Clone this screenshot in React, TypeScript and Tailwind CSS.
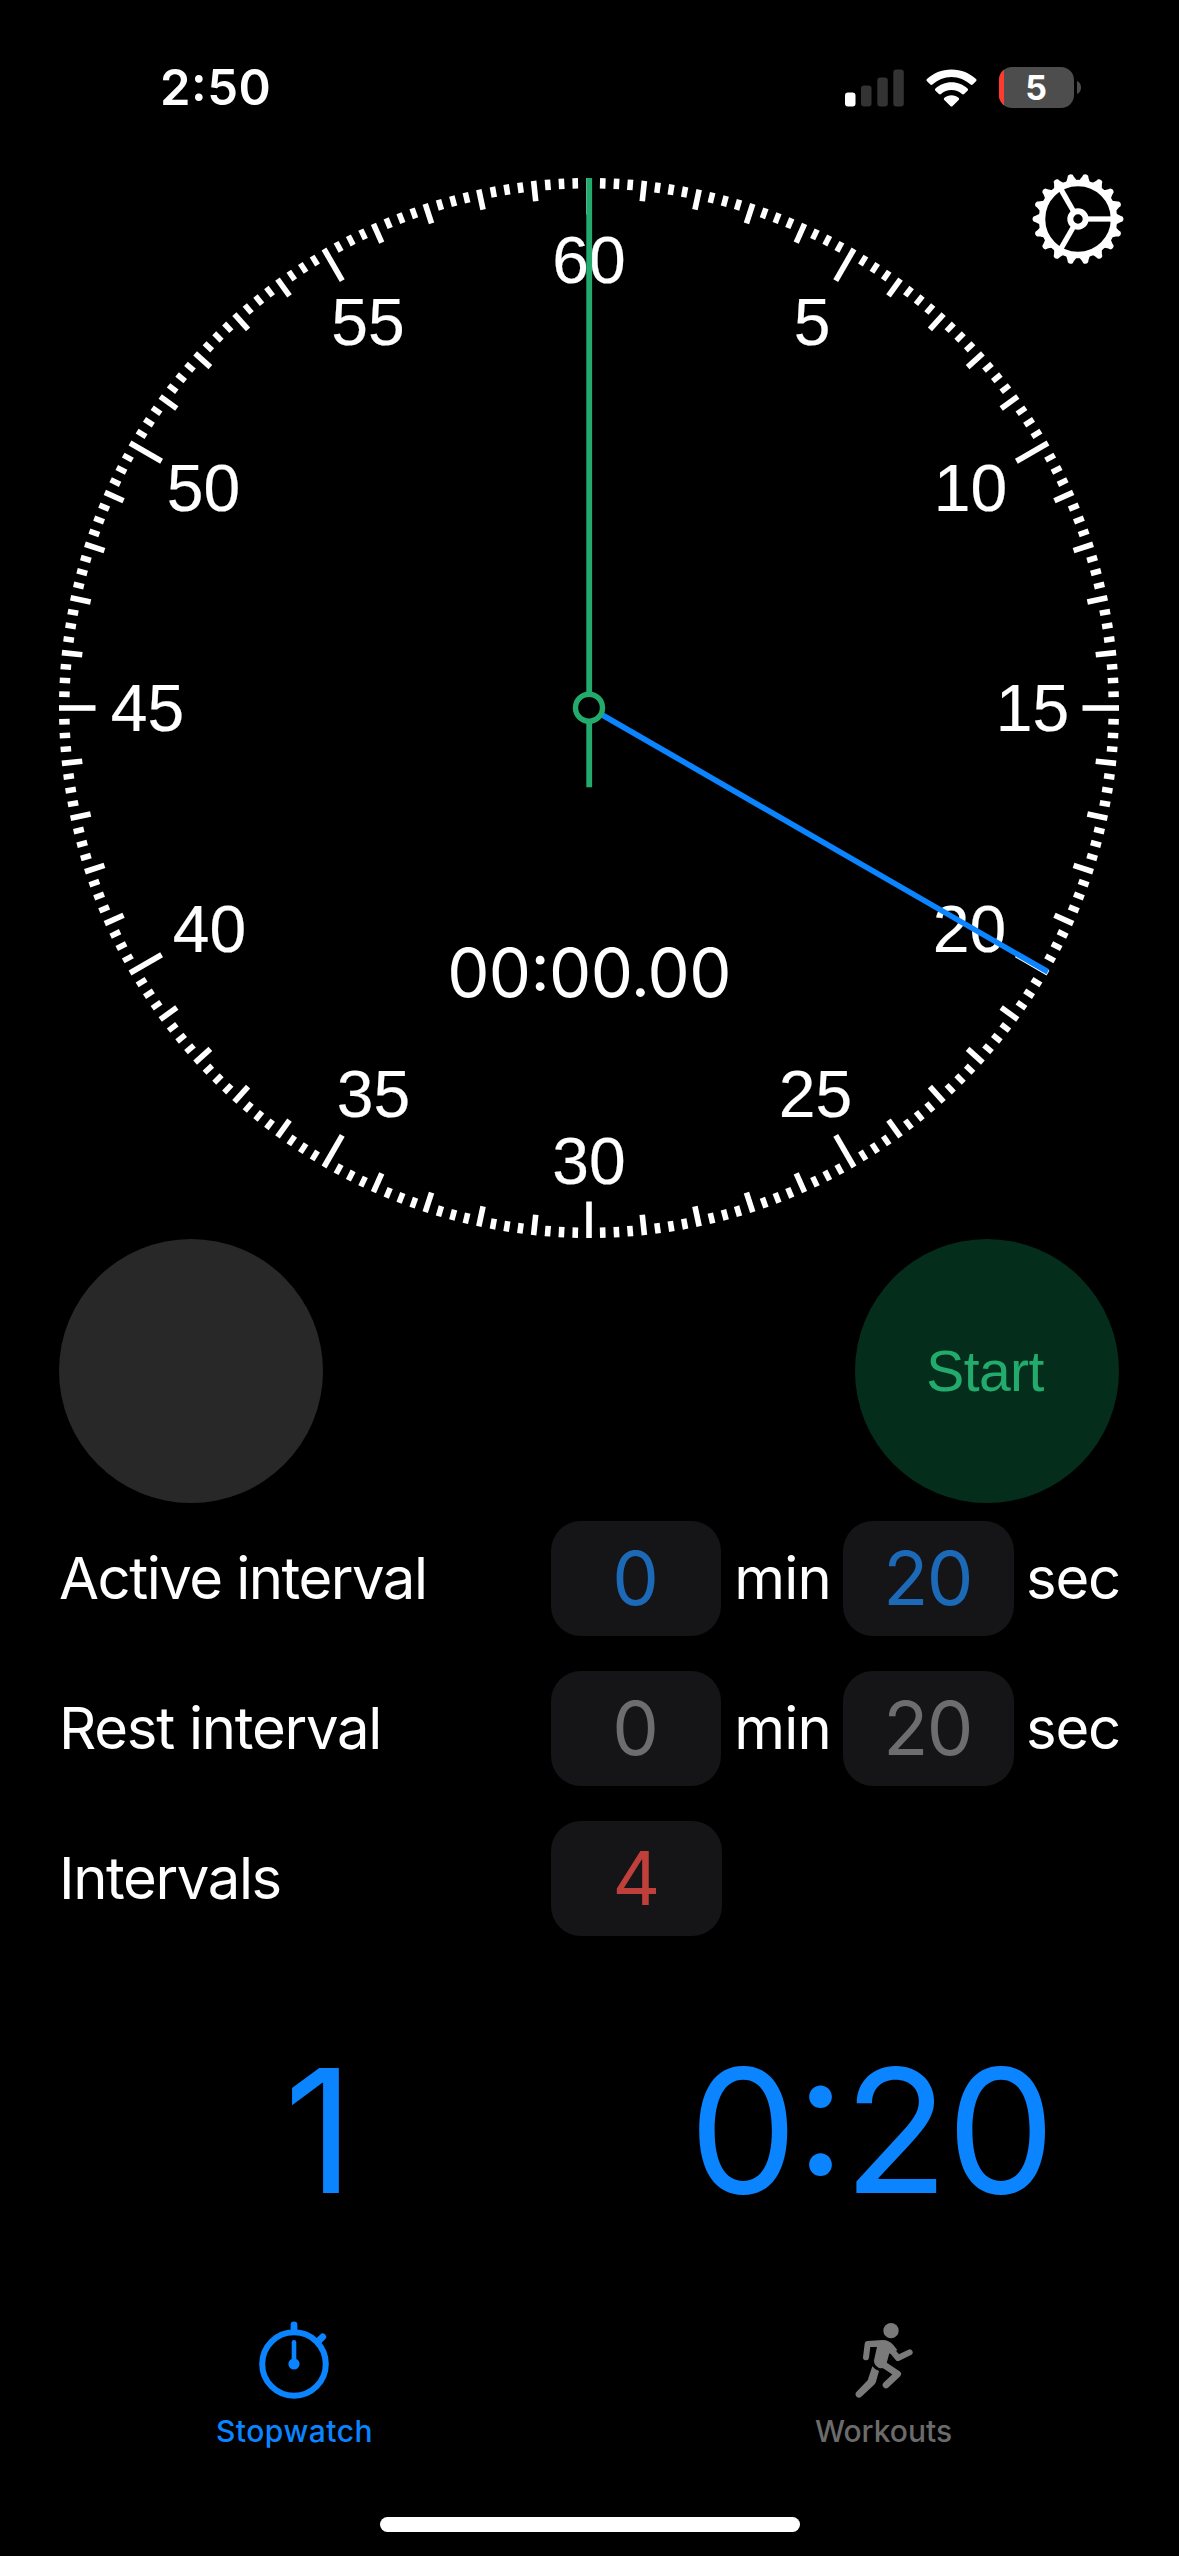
const GREEN = "#22ab6d";
const BLUE = "#0a84ff";

const TICKS = Array.from({ length: 240 }, (_, i) => i);

// Dial coordinates are relative to the dial centre.
const NUMBERS: { label: string; x: number; y: number }[] = [
  { label: "60", x: 0, y: -425 },
  { label: "5", x: 223, y: -363.5 },
  { label: "10", x: 381.5, y: -197.5 },
  { label: "15", x: 443.5, y: 23 },
  { label: "20", x: 380.5, y: 243.5 },
  { label: "25", x: 226.5, y: 409 },
  { label: "30", x: 0, y: 476 },
  { label: "35", x: -215.5, y: 409 },
  { label: "40", x: -379.5, y: 243.5 },
  { label: "45", x: -441.5, y: 23 },
  { label: "50", x: -385.5, y: -197.5 },
  { label: "55", x: -221, y: -363.5 },
];

function tickLength(i: number) {
  if (i % 20 === 0) return 36.5;
  if (i % 4 === 0) return 20.5;
  return 10.5;
}

function SignalIcon() {
  return (
    <svg width="59" height="38" viewBox="0 0 59 38">
      <rect x="0" y="23.5" width="10.5" height="14" rx="3" fill="#fff" />
      <rect x="16" y="16.5" width="10.5" height="21" rx="3" fill="#333" />
      <rect x="32.3" y="8.5" width="10.5" height="29" rx="3" fill="#333" />
      <rect x="48.3" y="0.5" width="10.5" height="37" rx="3" fill="#333" />
    </svg>
  );
}

function WifiIcon() {
  return (
    <svg width="51" height="38" viewBox="0 0 51 38">
      <path
        d="M25.5 .5C35.300 .5 44 4.300 50 10.100c.7.7.7 1.500 0 2.200l-3.300 3.300c-.6.6-1.500.6-2.100 0C39.500 10.900 32.800 8 25.500 8S11.500 10.900 6.400 15.600c-.6.6-1.500.6-2.100 0L1 12.300c-.7-.7-.7-1.500 0-2.200C7 4.300 15.700 .5 25.500 .5Z"
        fill="#fff"
      />
      <path
        d="M25.500 13.300c6.200 0 11.800 2.400 16 6.200.7.7.7 1.500 0 2.200l-3.400 3.300c-.6.6-1.400.6-2.100.1-2.800-2.600-6.500-4.100-10.500-4.100s-7.700 1.500-10.500 4.100c-.7.5-1.500.5-2.100-.1l-3.400-3.300c-.7-.7-.7-1.500 0-2.200 4.200-3.800 9.800-6.200 16-6.200Z"
        fill="#fff"
      />
      <path
        d="M25.500 26.200c2.700 0 5.200 1 7.100 2.600.7.6.7 1.500.1 2.200l-6.100 6c-.6.7-1.600.7-2.200 0l-6.100-6c-.6-.7-.6-1.600.1-2.200 1.900-1.600 4.400-2.600 7.100-2.600Z"
        fill="#fff"
      />
    </svg>
  );
}

function Battery() {
  return (
    <div className="flex items-center">
      <div className="relative flex h-[41px] w-[75px] items-center justify-center overflow-hidden rounded-[13px] bg-[#4d4d4d]">
        <div className="absolute inset-y-0 left-0 w-[5px] bg-[#ff3b30]" />
        <span className="pr-px text-[34px] leading-none font-bold">5</span>
      </div>
      <svg width="4" height="13" viewBox="0 0 4 13" className="ml-[3px]">
        <path d="M0 0c2.500 1 4 3.500 4 6.500S2.500 12 0 13Z" fill="#4d4d4d" />
      </svg>
    </div>
  );
}

function GearIcon() {
  const teeth = Array.from({ length: 18 }, (_, i) => i * 20);
  return (
    <svg width="92" height="92" viewBox="-46 -46 92 92">
      {teeth.map((a) => (
        <path
          key={a}
          d="M36 -6.500 C39.500 -5 41.500 -3.200 44.400 -2.500 Q46.600 0 44.400 2.500 C41.500 3.200 39.500 5 36 6.500Z"
          fill="#fff"
          transform={`rotate(${a})`}
        />
      ))}
      <circle r="36" fill="none" stroke="#fff" strokeWidth="6.500" />
      <circle r="7.700" fill="none" stroke="#fff" strokeWidth="6" />
      {[0, 120, 240].map((a) => (
        <line key={a} x1="9" x2="35" y1="0" y2="0" stroke="#fff" strokeWidth="5.300" transform={`rotate(${a})`} />
      ))}
    </svg>
  );
}

function Dial() {
  return (
    <svg width="1061" height="1060" viewBox="-530 -530 1061 1060" className="-mr-px block">
      <g fill="#fff">
        {TICKS.map((i) => (
          <rect key={i} x="-2.800" y="-530" width="5.600" height={tickLength(i)} transform={`rotate(${i * 1.5})`} />
        ))}
      </g>
      <g
        fill="#fff"
        stroke="#fff"
        strokeWidth="0.200"
        fontSize="66"
        textAnchor="middle"
        className="font-['Liberation_Sans',sans-serif]"
      >
        {NUMBERS.map((n) => (
          <text key={n.label} x={n.x} y={n.y}>
            {n.label}
          </text>
        ))}
      </g>
      <text x="0" y="288.500" fill="#fff" fontSize="67" textAnchor="middle" letterSpacing="-0.650">
        00<tspan dy="-6">:</tspan>
        <tspan dy="6">00.00</tspan>
      </text>
      <line x1="12" y1="6.200" x2="458.800" y2="263.800" stroke={BLUE} strokeWidth="5.600" />
      <path d="M0.200 -530V-13M0.200 13V79.300" stroke={GREEN} strokeWidth="5.800" />
      <circle cx="0" cy="-0.300" r="13.500" fill="#000" stroke={GREEN} strokeWidth="5.400" />
    </svg>
  );
}

function Field({ value, className }: { value: string; className: string }) {
  return (
    <div
      className={`flex h-[115px] w-[171px] items-center justify-center rounded-[30px] bg-[#151517] pr-[2px] pb-[2px] text-[74px] leading-none tracking-[-1.600px] ${className}`}
    >
      {value}
    </div>
  );
}

function IntervalRow({ label, labelClass, min, sec, color }: { label: string; labelClass: string; min: string; sec?: string; color: string }) {
  return (
    <div className="flex h-[115px] items-center text-[58px] leading-none">
      <div className={`w-[492px] pb-[2px] whitespace-nowrap ${labelClass}`}>{label}</div>
      <Field value={min} className={color} />
      {sec && (
        <>
          <div className="w-[122px] pb-[2px] pl-[13px] tracking-[-0.800px]">min</div>
          <Field value={sec} className={color} />
          <div className="pb-[2px] pl-[12px] tracking-[-1.200px]">sec</div>
        </>
      )}
    </div>
  );
}

function StopwatchIcon() {
  return (
    <svg width="72" height="80" viewBox="-36 -44 72 80" fill="none" stroke={BLUE} strokeLinecap="round">
      <circle r="31.800" strokeWidth="6" />
      <path d="M0 -39V-33M24.500 -23L28.700 -27.200" strokeWidth="6.800" />
      <path d="M0 -21.800V0" strokeWidth="4.600" />
      <circle r="5.600" fill={BLUE} stroke="none" />
    </svg>
  );
}

function RunnerIcon() {
  return (
    <svg width="60" height="80" viewBox="222 68 180 240" fill="none" stroke="#7a7a7a" strokeLinecap="round" strokeLinejoin="round">
      <circle cx="333" cy="100" r="23" fill="#7a7a7a" stroke="none" />
      <path d="M258 180L263 140H300" strokeWidth="18" />
      <path d="M322 143L354 182L389 165" strokeWidth="18" />
      <path d="M298 193L353 230L318 263" strokeWidth="20" />
      <path d="M262 131L308 128C322 128 333 134 340 143L352 158L332 170L328 168L320 197L330 212L300 213C284 205 280 196 283 184L291 149Z" fill="#7a7a7a" stroke="none" />
      <path d="M277 207Q284 217 297 221L288 253Q286 259 281 264L243 299C234 306 221 294 229 284L263 249Z" fill="#7a7a7a" stroke="none" />
    </svg>
  );
}

export default function App() {
  return (
    <div className="flex h-[2556px] w-[1179px] flex-col overflow-hidden bg-black font-['Inter',sans-serif] text-white">
      <header className="flex h-[178px] items-start justify-between pr-[98px] pl-[160px]">
        <div className="mt-[58px] text-[49px] leading-[60px] font-semibold tracking-[0.500px]">
          2<span className="relative -top-[4px]">:</span>50
        </div>
        <div className="mt-[67px] flex h-[41px] items-center">
          <SignalIcon />
          <div className="ml-[22px]">
            <WifiIcon />
          </div>
          <div className="ml-[22px]">
            <Battery />
          </div>
        </div>
      </header>

      <main className="flex flex-col px-[59px]">
        <div className="relative w-[1060px]">
          <Dial />
          <button aria-label="Settings" className="absolute top-[-5px] right-[-5px]">
            <GearIcon />
          </button>
        </div>

        <div className="mt-px flex w-[1060px] justify-between">
          <button aria-label="Reset" className="size-[264px] rounded-full bg-[#282828]" />
          <button className="size-[264px] rounded-full bg-[#052d1b] pr-[4px] font-['Liberation_Sans',sans-serif] text-[57px] leading-none tracking-[-0.600px] text-[#22ab6d]">
            Start
          </button>
        </div>

        <div className="mt-[18px] flex flex-col gap-[35px]">
          <IntervalRow label="Active interval" labelClass="tracking-[-1.500px]" min="0" sec="20" color="text-[#1c69b8]" />
          <IntervalRow label="Rest interval" labelClass="tracking-[-1.250px]" min="0" sec="20" color="text-[#6d6d70]" />
          <IntervalRow label="Intervals" labelClass="tracking-[-1.400px]" min="4" color="text-[#bf403b]" />
        </div>

        <div className="mt-[108px] flex h-[172px] text-[172px] leading-none text-[#0a84ff]">
          <div className="w-[630px] pl-[225px]">1</div>
          <div className="tracking-[-1.750px]">
            0<span className="relative -top-[18px]">:</span>20
          </div>
        </div>
      </main>

      <nav className="mt-[104px] flex h-[140px]">
        <a className="flex w-[588px] flex-col items-center text-[#0a84ff]">
          <StopwatchIcon />
          <span className="mt-[15px] pl-px text-[30px] leading-[32px] font-medium tracking-[0.500px]">Stopwatch</span>
        </a>
        <a className="flex w-[591px] flex-col items-center text-[#6b6b6b]">
          <RunnerIcon />
          <span className="mt-[15px] text-[30px] leading-[32px] font-medium">Workouts</span>
        </a>
      </nav>

      <div className="mt-[57px] h-[15px] w-[420px] self-center rounded-full bg-white" />
    </div>
  );
}
